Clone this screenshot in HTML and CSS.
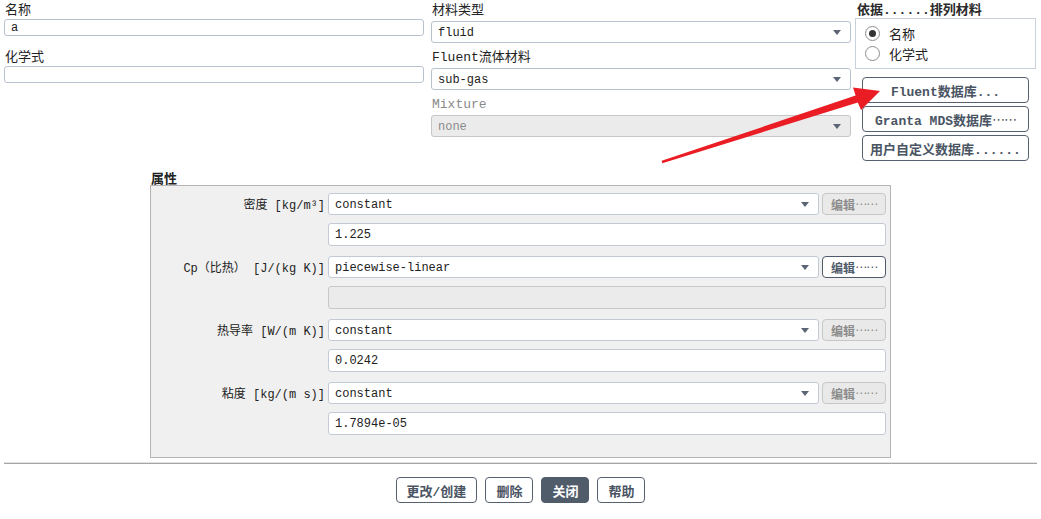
FILE: index.html
```html
<!DOCTYPE html>
<html lang="zh-CN">
<head>
<meta charset="utf-8">
<title>材料</title>
<link rel="stylesheet" href="styles.css">
</head>
<body>
<div class="page">
  <div class="top">
    <div class="col col1">
      <div class="flabel">名称</div>
      <div class="input first">a</div>
      <div class="flabel gap">化学式</div>
      <div class="input first"></div>
    </div>
    <div class="col col2">
      <div class="flabel">材料类型</div>
      <div class="select"><span>fluid</span></div>
      <div class="flabel next">Fluent流体材料</div>
      <div class="select"><span>sub-gas</span></div>
      <div class="flabel next muted">Mixture</div>
      <div class="select disabled"><span>none</span></div>
    </div>
    <div class="col col3">
      <div class="sort-title">依据......排列材料</div>
      <div class="radio-box">
        <div class="radio-row"><span class="radio on"></span><span class="rtext">名称</span></div>
        <div class="radio-row"><span class="radio"></span><span class="rtext">化学式</span></div>
      </div>
      <div class="dbbtn first-db">Fluent数据库...</div>
      <div class="dbbtn">Granta MDS数据库<span class="dots">⋯⋯</span></div>
      <div class="dbbtn">用户自定义数据库......</div>
    </div>
  </div>

  <div class="props">
    <div class="props-title">属性</div>
    <div class="panel">
      <div class="prop">
        <div class="plabel">密度 [kg/m³]</div>
        <div class="pselect"><span>constant</span></div>
        <div class="edit">编辑<span class="dots">⋯⋯</span></div>
        <div class="pfield">1.225</div>
      </div>
      <div class="prop">
        <div class="plabel">Cp（比热） [J/(kg K)]</div>
        <div class="pselect"><span>piecewise-linear</span></div>
        <div class="edit active">编辑<span class="dots">⋯⋯</span></div>
        <div class="pfield disabled"></div>
      </div>
      <div class="prop">
        <div class="plabel">热导率 [W/(m K)]</div>
        <div class="pselect"><span>constant</span></div>
        <div class="edit">编辑<span class="dots">⋯⋯</span></div>
        <div class="pfield">0.0242</div>
      </div>
      <div class="prop">
        <div class="plabel">粘度 [kg/(m s)]</div>
        <div class="pselect"><span>constant</span></div>
        <div class="edit">编辑<span class="dots">⋯⋯</span></div>
        <div class="pfield">1.7894e-05</div>
      </div>
    </div>
  </div>

  <div class="sep"></div>

  <div class="actions">
    <div class="btn">更改/创建</div>
    <div class="btn">删除</div>
    <div class="btn primary">关闭</div>
    <div class="btn">帮助</div>
  </div>

  <svg class="arrow" width="1041" height="519" viewBox="0 0 1041 519" aria-hidden="true">
    <polygon fill="#ea1d25" points="662.3,163.2 857.8,102.6 861,110 880,91 853,87.5 855.6,95.6 661.7,160.8"/>
  </svg>
</div>
</body>
</html>
```

FILE: styles.css
```css
html, body {
  margin: 0;
  padding: 0;
  background: #ffffff;
}

body {
  font-family: "Liberation Mono", "Noto Sans CJK SC", monospace;
  color: #222222;
}

.page {
  position: relative;
  width: 1041px;
  height: 519px;
  overflow: hidden;
}

.dots {
  font-family: "DejaVu Sans", "Noto Sans CJK SC", sans-serif;
  font-weight: normal;
  letter-spacing: -1px;
}

/* top area */
.top {
  display: flex;
  padding-left: 4px;
  height: 162px;
}

.col1 {
  width: 420px;
}

.col2 {
  width: 420px;
  margin-left: 7px;
}

.col3 {
  width: 181px;
  margin-left: 4px;
}

.flabel {
  box-sizing: border-box;
  font-size: 13px;
  line-height: 18px;
  height: 20px;
  padding-top: 2px;
  padding-left: 1px;
  white-space: nowrap;
}

.flabel.gap {
  margin-top: 11px;
}

.flabel.next {
  margin-top: 4px;
}

.flabel.muted {
  color: #8a8a8a;
}

.input {
  box-sizing: border-box;
  height: 17px;
  border: 1px solid #b9c2cf;
  border-radius: 3px;
  background: #fff;
  font-size: 12px;
  line-height: 16px;
  padding-left: 6px;
}

.input.first {
  margin-top: -1px;
}

.select {
  box-sizing: border-box;
  height: 22px;
  margin-top: 1px;
  border: 1px solid #b9c2cf;
  border-radius: 3px;
  background: #fff;
  display: flex;
  align-items: center;
  padding: 1px 6px 0 6px;
  font-size: 12px;
}

.select::after,
.pselect::after {
  content: "";
  margin-left: auto;
  margin-right: 3px;
  border-left: 4px solid transparent;
  border-right: 4px solid transparent;
  border-top: 5px solid #5b6575;
}

.select.disabled {
  background: #ebebeb;
  border-color: #c6c6c6;
  color: #8a8a8a;
}

/* sort box */
.sort-title {
  box-sizing: border-box;
  font-size: 13px;
  font-weight: bold;
  line-height: 15px;
  height: 18px;
  padding-top: 3px;
  padding-left: 2px;
  color: #2a2a2a;
  white-space: nowrap;
}

.radio-box {
  box-sizing: border-box;
  height: 51px;
  border: 1px solid #c9d1dd;
  padding: 4px 0 0 9px;
}

.radio-row {
  display: flex;
  align-items: center;
  height: 20px;
}

.radio {
  box-sizing: border-box;
  width: 15px;
  height: 15px;
  border: 1px solid #8d8d8d;
  border-radius: 50%;
  background: #fff;
  display: flex;
  align-items: center;
  justify-content: center;
}

.radio.on::after {
  content: "";
  width: 7px;
  height: 7px;
  border-radius: 50%;
  background: #333;
}

.rtext {
  margin-left: 9px;
  font-size: 13px;
  font-family: "Noto Sans CJK SC", sans-serif;
}

.dbbtn {
  box-sizing: border-box;
  margin-left: 7px;
  margin-top: 3px;
  width: 167px;
  height: 26px;
  border: 1px solid #56606f;
  border-radius: 4px;
  background: #fff;
  color: #4a5463;
  font-size: 13px;
  font-weight: bold;
  display: flex;
  align-items: center;
  justify-content: center;
  white-space: nowrap;
}

.dbbtn.first-db {
  margin-top: 8px;
}

/* properties */
.props {
  margin: 8px 0 0 150px;
  width: 741px;
}

.props-title {
  font-size: 13px;
  font-weight: bold;
  line-height: 15px;
  height: 15px;
  padding-left: 1px;
  font-family: "Noto Sans CJK SC", sans-serif;
}

.panel {
  box-sizing: border-box;
  border: 1px solid #b4b4b4;
  background: #f0f0f0;
  padding: 7px 4px 22px 0;
  display: flex;
  flex-direction: column;
  gap: 10px;
}

.prop {
  display: grid;
  grid-template-columns: 174px 1fr 64px;
  grid-template-rows: 22px 23px;
  column-gap: 3px;
  row-gap: 8px;
}

.plabel {
  font-size: 12px;
  text-align: right;
  align-self: center;
  white-space: nowrap;
}

.pselect {
  box-sizing: border-box;
  height: 22px;
  border: 1px solid #c3cad5;
  border-radius: 3px;
  background: #fff;
  display: flex;
  align-items: center;
  padding: 1px 6px 0 6px;
  font-size: 12px;
}

.edit {
  box-sizing: border-box;
  height: 22px;
  border: 1px solid #c7c7c7;
  border-radius: 4px;
  background: #e9e9e9;
  color: #8c8c8c;
  font-size: 12px;
  font-weight: bold;
  display: flex;
  align-items: center;
  justify-content: center;
  font-family: "Noto Sans CJK SC", sans-serif;
}

.edit.active {
  background: #fff;
  border-color: #4f5a6a;
  color: #4f5a6a;
}

.pfield {
  grid-column: 2 / 4;
  box-sizing: border-box;
  height: 23px;
  border: 1px solid #c3cad5;
  border-radius: 3px;
  background: #fff;
  font-size: 12px;
  padding: 1px 0 0 6px;
  display: flex;
  align-items: center;
}

.pfield.disabled {
  background: #ebebeb;
  border-color: #c8c8c8;
}

/* bottom */
.sep {
  margin: 4px 4px 0 4px;
  height: 0;
  border-top: 1px solid #e2e2e2;
  border-bottom: 1px solid #a6a6a6;
}

.actions {
  display: flex;
  justify-content: center;
  gap: 8px;
  margin-top: 13px;
}

.btn {
  box-sizing: border-box;
  height: 26px;
  border: 1px solid #56606f;
  border-radius: 4px;
  background: #fff;
  color: #4a5463;
  font-size: 13px;
  font-weight: bold;
  padding: 0 10px;
  display: flex;
  align-items: center;
  white-space: nowrap;
}

.btn.primary {
  background: #515c6b;
  border-color: #515c6b;
  color: #fff;
}

.arrow {
  position: absolute;
  left: 0;
  top: 0;
  pointer-events: none;
}
```
